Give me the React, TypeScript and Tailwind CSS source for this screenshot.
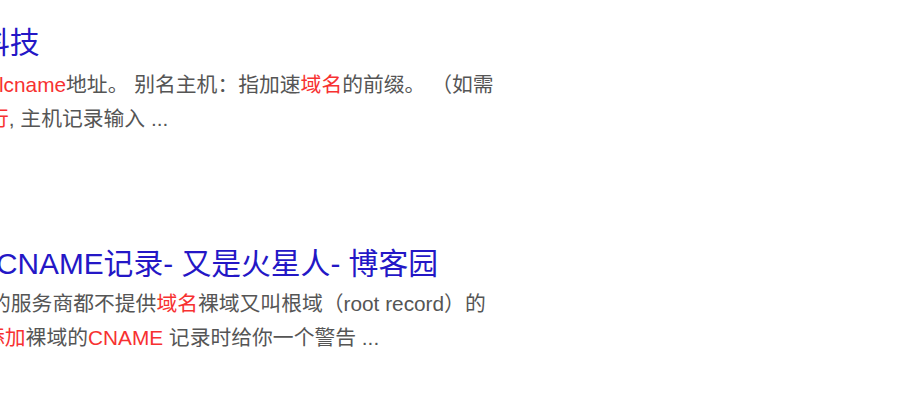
export default function App() {
  const font = {
    fontFamily: '"Liberation Sans", Arial, "Noto Sans CJK SC", sans-serif',
  };
  return (
    <div
      className="w-[909px] h-[415px] bg-white overflow-hidden relative"
      style={font}
    >
      <div className="flex flex-col pt-[22px]">
        {/* Result 1 */}
        <div className="flex flex-col">
          <div className="h-[42px] leading-[42px] text-[29.8px] text-[#2417c6] whitespace-nowrap">
            <span className="ml-[-20px]">科技</span>
          </div>
          <div className="mt-[4px] text-[20.8px] leading-[34px] text-[#555555] whitespace-nowrap">
            <div>
              <span className="text-[#f73131] ml-[-1px]">lcname</span>地址。 别名主机：指加速
              <span className="text-[#f73131]">域名</span>的前缀。 （如需
            </div>
            <div>
              <span className="text-[#f73131] ml-[-12px]">行</span>, 主机记录输入 ...
            </div>
          </div>
        </div>

        {/* Result 2 */}
        <div className="flex flex-col mt-[107px]">
          <div className="h-[42px] leading-[42px] text-[29.8px] text-[#2417c6] whitespace-nowrap">
            <span className="ml-[-4px]">CNAME记录- 又是火星人- 博客园</span>
          </div>
          <div className="mt-[2px] text-[20.8px] leading-[34px] text-[#555555] whitespace-nowrap">
            <div>
              <span className="ml-[-10px]">的</span>服务商都不提供
              <span className="text-[#f73131]">域名</span>裸域又叫根域（root record）的
            </div>
            <div>
              <span className="text-[#f73131] ml-[-16px]">添加</span>裸域的
              <span className="text-[#f73131]">CNAME</span> 记录时给你一个警告 ...
            </div>
          </div>
        </div>
      </div>
    </div>
  );
}
